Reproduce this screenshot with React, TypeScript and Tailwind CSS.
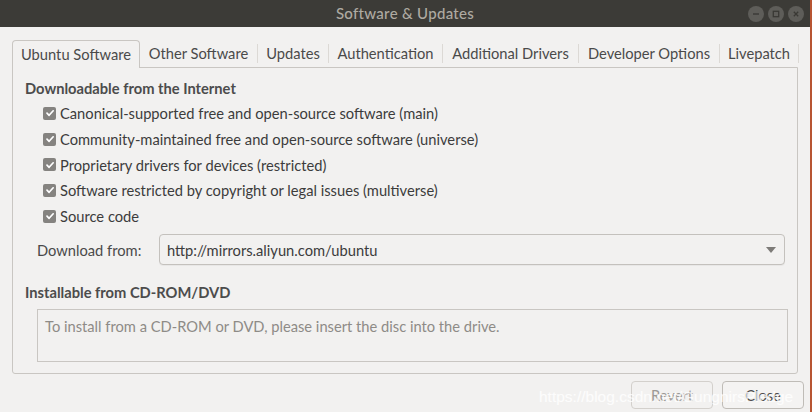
import React from 'react';

const tabs = [
    { label: 'Ubuntu Software', w: 'w-[128px]' },
    { label: 'Other Software', w: 'w-[118px]' },
    { label: 'Updates', w: 'w-[71px]' },
    { label: 'Authentication', w: 'w-[114px]' },
    { label: 'Additional Drivers', w: 'w-[136px]' },
    { label: 'Developer Options', w: 'w-[141px]' },
    { label: 'Livepatch', w: 'w-[79px]' },
];

const sources = [
    'Canonical-supported free and open-source software (main)',
    'Community-maintained free and open-source software (universe)',
    'Proprietary drivers for devices (restricted)',
    'Software restricted by copyright or legal issues (multiverse)',
    'Source code',
];

const CheckBox = () => (
    <span className="flex h-[13px] w-[13px] items-center justify-center rounded-[2px] bg-[#858380]">
        <svg width="10" height="10" viewBox="0 0 10 10">
            <path d="M2 5.2 L4.1 7.3 L8.2 2.8" fill="none" stroke="#ffffff" strokeWidth="1.7" strokeLinecap="round" strokeLinejoin="round" />
        </svg>
    </span>
);

const WinButton = ({ kind }: { kind: 'min' | 'max' | 'close' }) => (
    <span className="flex h-[16px] w-[16px] items-center justify-center rounded-full bg-[#5e5d59]">
        <svg width="10" height="10" viewBox="0 0 10 10">
            {kind === 'min' && <path d="M2 5 H8" stroke="#3a3935" strokeWidth="1.4" />}
            {kind === 'max' && <rect x="2.3" y="2.3" width="5.4" height="5.4" fill="none" stroke="#3a3935" strokeWidth="1.3" />}
            {kind === 'close' && <path d="M2.8 2.8 L7.2 7.2 M7.2 2.8 L2.8 7.2" stroke="#3a3935" strokeWidth="1.3" />}
        </svg>
    </span>
);

export default function App() {
    return (
        <div
            className="relative flex h-[412px] w-[812px] flex-col overflow-hidden border-r-2 border-[#b85532] bg-[#f2f1f0] text-[14.7px] text-[#3c3c3c]"
            style={{ fontFamily: 'Lato, "Noto Sans", sans-serif' }}
        >
            {/* title bar */}
            <div className="relative flex h-[27px] shrink-0 items-center justify-center bg-[#3c3b37]">
                <span className="text-[15px] font-medium tracking-[0.3px] text-[#aeaaa2]">Software &amp; Updates</span>
                <div className="absolute right-[6px] top-[6px] flex gap-[4px]">
                    <WinButton kind="min" />
                    <WinButton kind="max" />
                    <WinButton kind="close" />
                </div>
            </div>

            {/* notebook */}
            <div className="ml-[12px] mt-[13px] flex w-[787px] flex-col">
                <div className="flex h-[27px] items-stretch">
                    {tabs.map((t, i) =>
                        i === 0 ? (
                            <div
                                key={t.label}
                                className={`${t.w} relative z-10 -mb-px flex items-center justify-center rounded-t-[4px] border border-b-0 border-[#c9c6c2] bg-[#f2f1f0] text-[#4a4a4a]`}
                            >
                                {t.label}
                            </div>
                        ) : (
                            <div key={t.label} className={`${t.w} flex items-center py-[4px]`}>
                                <div className="flex h-full w-full items-center justify-center border-r border-[#dcd9d5] text-[#4a4a4a]">
                                    {t.label}
                                </div>
                            </div>
                        )
                    )}
                </div>

                <div className="flex h-[307px] w-[786px] flex-col rounded-b-[3px] border border-[#c9c6c2] pl-[12px] pr-[12px]">
                    <div className="mt-[9px] font-bold text-[#4c4c4c]">Downloadable from the Internet</div>
                    <div className="mt-[4px] flex flex-col gap-[5px] pl-[18px]">
                        {sources.map((s) => (
                            <label key={s} className="flex h-[20.7px] items-center gap-[4px]">
                                <CheckBox />
                                <span className="whitespace-nowrap">{s}</span>
                            </label>
                        ))}
                    </div>

                    <div className="mt-[8px] flex items-center pl-[12px]">
                        <span className="w-[122px] text-[#4a4a4a]">Download from:</span>
                        <div className="flex h-[31px] flex-1 items-center justify-between rounded-[4px] border border-[#c4c1bd] bg-[#f2f1f0] pl-[7px] pr-[8px] shadow-[0_1px_0_rgba(0,0,0,0.04)]">
                            <span>http://mirrors.aliyun.com/ubuntu</span>
                            <svg width="10" height="6" viewBox="0 0 10 6">
                                <path d="M0 0 H10 L5 6 Z" fill="#7d7b78" />
                            </svg>
                        </div>
                    </div>

                    <div className="mt-[16px] font-bold text-[#4c4c4c]">Installable from CD-ROM/DVD</div>
                    <div className="ml-[12px] mt-[5px] h-[53px] w-[751px] border border-[#c9c6c2] px-[7px] pt-[5px] text-[#8e8b87]">
                        To install from a CD-ROM or DVD, please insert the disc into the drive.
                    </div>
                </div>
            </div>

            {/* dialog buttons */}
            <div className="mt-[7px] flex justify-end gap-[9px] pr-[6px]">
                <button className="flex h-[28px] w-[82px] items-center justify-center rounded-[4px] border border-[#d3d0cc] bg-[#f2f1f0] text-[#9c9995]">
                    Revert
                </button>
                <button className="flex h-[28px] w-[82px] items-center justify-center rounded-[4px] border border-[#bfbcb7] bg-[#f4f3f2] text-[#4a4a4a]">
                    Close
                </button>
            </div>

            {/* watermark */}
            <span
                className="pointer-events-none absolute left-[539px] top-[385px] text-[15.5px] text-white/80"
                style={{ fontFamily: '"Liberation Sans", Arial, sans-serif' }}
            >
                https://blog.csdn.net/GungnirsPledge
            </span>
        </div>
    );
}
